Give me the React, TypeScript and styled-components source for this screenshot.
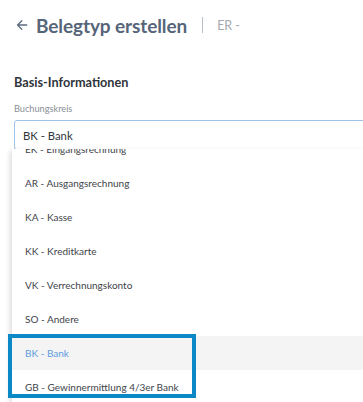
import React from "react";
import styled, { createGlobalStyle } from "styled-components";

const GlobalStyle = createGlobalStyle`
  html, body {
    margin: 0;
    padding: 0;
    background: #ffffff;
    overflow: hidden;
  }
  body {
    font-family: Lato, "Open Sans", "Liberation Sans", sans-serif;
  }
`;

const options = [
  "EK - Eingangsrechnung",
  "AR - Ausgangsrechnung",
  "KA - Kasse",
  "KK - Kreditkarte",
  "VK - Verrechnungskonto",
  "SO - Andere",
  "BK - Bank",
  "GB - Gewinnermittlung 4/3er Bank",
];

const selected = "BK - Bank";

export default function App(): React.ReactElement {
  return (
    <Page>
      <GlobalStyle />
      <Header>
        <BackArrow viewBox="0 0 14 14" aria-hidden>
          <path d="M12.5 7H1.8M6.8 2L1.8 7l5 5" />
        </BackArrow>
        <Title>Belegtyp erstellen</Title>
        <Divider />
        <SubTitle>ER -</SubTitle>
      </Header>

      <Section>
        <SectionTitle>Basis-Informationen</SectionTitle>
        <FieldLabel>Buchungskreis</FieldLabel>
        <SelectWrap>
          <SelectInput>{selected}</SelectInput>
          <Dropdown>
            {/* list is scrolled a little, first entry half hidden */}
            <OptionList $scroll={17}>
              {options.map((o) => (
                <Option key={o} $active={o === selected}>
                  {o}
                </Option>
              ))}
            </OptionList>
          </Dropdown>
          <Highlight />
        </SelectWrap>
      </Section>
    </Page>
  );
}

const Page = styled.div`
  width: 363px;
  height: 402px;
  overflow: hidden;
  background: #fff;
`;

const Header = styled.div`
  display: flex;
  align-items: center;
  height: 24px;
  padding: 13px 0 0 16px;
`;

const BackArrow = styled.svg`
  width: 12px;
  height: 12px;
  fill: none;
  stroke: #5d6b7e;
  stroke-width: 1.5;
  stroke-linecap: round;
  stroke-linejoin: round;
  margin-right: 8px;
`;

const Title = styled.h1`
  margin: 0;
  font-size: 19px;
  font-weight: 700;
  color: #56657a;
  letter-spacing: -0.1px;
`;

const Divider = styled.span`
  width: 1px;
  height: 16px;
  background: #b8bec6;
  margin: 0 14px 0 15px;
`;

const SubTitle = styled.span`
  font-size: 12.5px;
  color: #a4a9b0;
`;

const Section = styled.div`
  padding: 36px 0 0 14px;
`;

const SectionTitle = styled.h2`
  margin: 0;
  font-size: 12.7px;
  font-weight: 700;
  color: #30353c;
  line-height: 18px;
`;

const FieldLabel = styled.div`
  margin-top: 11px;
  font-size: 9.2px;
  color: #8a8f96;
  line-height: 13px;
`;

const SelectWrap = styled.div`
  position: relative;
  margin-top: 5px;
`;

const SelectInput = styled.div`
  height: 28px;
  display: flex;
  align-items: center;
  padding-left: 8px;
  margin-right: -6px;
  border: 1px solid #9cc3ea;
  border-radius: 3px;
  font-size: 11.3px;
  color: #30353b;
`;

const Dropdown = styled.div`
  position: absolute;
  top: 29px;
  left: -2px;
  right: -20px;
  height: 260px;
  overflow: hidden;
  background: #fff;
  box-shadow: -2px 2px 5px rgba(0, 0, 0, 0.14);
`;

const OptionList = styled.div<{ $scroll: number }>`
  margin-top: ${(p) => -p.$scroll}px;
`;

const Option = styled.div<{ $active?: boolean }>`
  height: 34px;
  display: flex;
  align-items: center;
  padding-left: 13px;
  font-size: 10px;
  color: ${(p) => (p.$active ? "#5d9be0" : "#3e434a")};
  background: ${(p) => (p.$active ? "#f4f4f4" : "transparent")};
`;

const Highlight = styled.div`
  position: absolute;
  top: 214px;
  left: -6px;
  width: 180px;
  height: 56px;
  border: 4px solid #0a89c6;
  pointer-events: none;
`;
